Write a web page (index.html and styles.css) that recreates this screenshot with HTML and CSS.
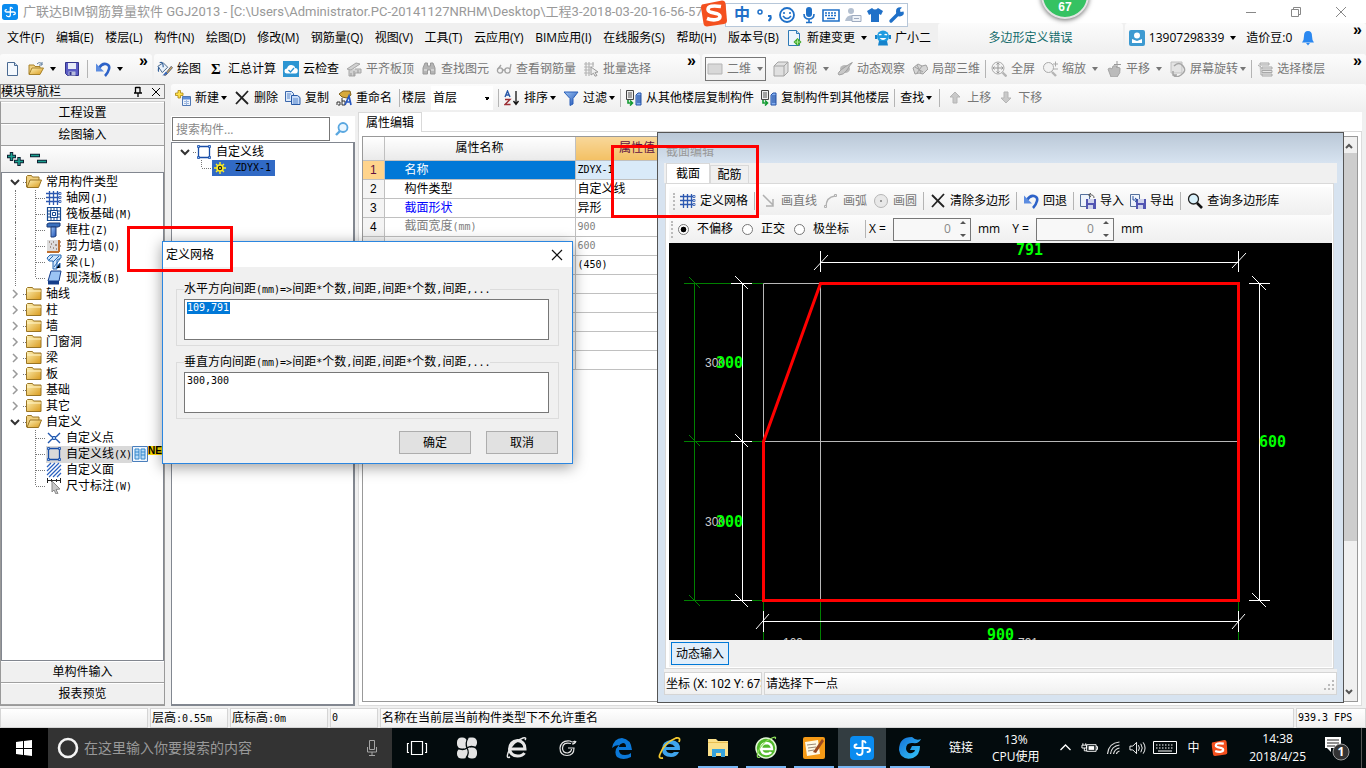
FILE: index.html
```html
<!DOCTYPE html>
<html lang="zh-CN">
<head>
<meta charset="utf-8">
<title>广联达BIM钢筋算量软件 GGJ2013</title>
<link rel="stylesheet" href="styles.css">
</head>
<body>
<svg class="sprite" aria-hidden="true">
  <defs>
    <linearGradient id="gold" x1="0" y1="0" x2="1" y2="1"><stop offset="0" stop-color="#fff3b8"/><stop offset="1" stop-color="#d99a1c"/></linearGradient>
    <linearGradient id="blue" x1="0" y1="0" x2="1" y2="1"><stop offset="0" stop-color="#9cc4f4"/><stop offset="1" stop-color="#1c4fb4"/></linearGradient>
    <linearGradient id="flame" x1="0" y1="0" x2="1" y2="1"><stop offset="0" stop-color="#1470d8"/><stop offset="1" stop-color="#35c8f8"/></linearGradient>
  </defs>
  <symbol id="app" viewBox="0 0 24 24"><rect width="24" height="24" rx="4" fill="#0a8cf0"/><path d="M12.500 5v11q0 3-3 3-2 0-2.500-1.500M12.500 12H6.500Q4.500 12 4.500 10.300t2-1.800M12.500 12h5q2.500 0 2.500 2t-2.500 2M12.500 5q2.500 0 3 1.500" fill="none" stroke="#fff" stroke-width="1.900" stroke-linecap="round"/></symbol>
  <symbol id="new" viewBox="0 0 16 16"><path d="M2.500 1.500h7l3 3v10h-10z" fill="#f4f8fd" stroke="#4a6a92"/><path d="M9.500 1.500v3h3" fill="#cfdff2" stroke="#4a6a92"/></symbol>
  <symbol id="open" viewBox="0 0 16 16"><path d="M1 13V4h5l1 1.500h5V7" fill="#f0d080" stroke="#a8822a"/><path d="M1 13.500 4 7h11.500L12 13.500z" fill="url(#gold)" stroke="#a8822a"/><path d="M9 3q3-3 5 .5m0-2.500v3h-3" fill="none" stroke="#5b7a9c"/></symbol>
  <symbol id="save" viewBox="0 0 16 16"><path d="M1.500 1.500h13v13h-11l-2-2z" fill="#5b5cc4" stroke="#33348c"/><path d="M4 2h8v6H4z" fill="#e8ecf8"/><path d="M4.500 10.500h7v4h-7z" fill="#b9bedc"/><path d="M5.500 11h2v3h-2z" fill="#33348c"/></symbol>
  <symbol id="undo" viewBox="0 0 16 16"><path d="M4 7q3-5 7-4t3 5-4 7" fill="none" stroke="#2d62c8" stroke-width="2.600"/><path d="M1 2.500v8h8z" fill="#5c8ce0"/></symbol>
  <symbol id="draw" viewBox="0 0 18 16"><path d="M1 5l6-4 5 5-6 6z" fill="#eaf2fb" stroke="#35577e"/><path d="M3 1q4-2 4 5M2 6q-1 4 0 5" fill="none" stroke="#2f5e9a" stroke-width="1.300"/><path d="M8 15l8-10 1.500 1.500L10 15z" fill="#d8a850" stroke="#4d5d82"/><path d="M6 15.500 10 11l2 2z" fill="#2c63c0"/></symbol>
  <symbol id="cloud" viewBox="0 0 16 16"><path d="M0 0h16v16H0z" fill="#2c95d2"/><path d="M4 12.500q-2.500 0-2.500-2.500T4 7.500Q5 3.500 8.500 4T12 7q3 0 2.800 3t-2.800 2.500z" fill="#fff"/><path d="m5.500 9 2 2L11 7" fill="none" stroke="#2c95d2" stroke-width="1.300"/></symbol>
  <symbol id="align" viewBox="0 0 16 16"><path d="M1 8 10 2l4 1-9 6zM3 9v6h6v-3h6V8H9" fill="#d2d2d2" stroke="#a6a6a6"/><path d="M5 12v3M8 10v5M12 9v3" stroke="#999"/></symbol>
  <symbol id="binoc" viewBox="0 0 16 16"><path d="M2 7 4 2h2.500v3h3V2H12l2 5v6H9.500V9h-3v4H2z" fill="#b5b5b5" stroke="#999"/><path d="M3 9h3M10 9h3" stroke="#eee"/></symbol>
  <symbol id="glasses" viewBox="0 0 16 16"><g fill="none" stroke="#a3a3a3" stroke-width="1.300"><circle cx="4" cy="9.500" r="2.600"/><circle cx="11.500" cy="9.500" r="2.600"/><path d="M6.500 9h2.500M2 8l3-4M14 8l1-5"/></g></symbol>
  <symbol id="batch" viewBox="0 0 16 16"><path d="M1 3h10M1 6h8M1 9h6M1 12h6M3 1v14M6 1v14M10 1v5" stroke="#b5b5b5" stroke-width="1.200"/><path d="m8 6 7 5-3 .5 2 3-2 .7-1.500-3L8 14z" fill="#eee" stroke="#999"/></symbol>
  <symbol id="flat" viewBox="0 0 16 16"><path d="M1 3h14v10H1z" fill="#d8d8d8" stroke="#b5b5b5"/></symbol>
  <symbol id="cube" viewBox="0 0 16 16"><path d="M1 5 5 1h10v10l-4 4H1z" fill="#e0e0e0" stroke="#a4a4a4"/><path d="M1 5h10v10M11 5l4-4" fill="none" stroke="#a4a4a4"/></symbol>
  <symbol id="orbit" viewBox="0 0 16 16"><ellipse cx="8" cy="8" rx="5" ry="4" fill="#b8b8b8"/><path d="M2 14Q-1 12 8 6t7-4-5 7-8 5z" fill="#c8c8c8" stroke="#a0a0a0"/></symbol>
  <symbol id="local" viewBox="0 0 16 16"><path d="m1 7 5-4 4 2 4-1 2 4-5 5-4-1-4 1z" fill="#d5d5d5" stroke="#a0a0a0"/><path d="m5 4 4 8M10 5l-5 7M3 6l8 5" stroke="#a0a0a0"/></symbol>
  <symbol id="full" viewBox="0 0 16 16"><circle cx="7" cy="7" r="6" fill="#f2f2f2" stroke="#aaa"/><path d="M7 2v10M2 7h10M5.500 3.500 7 2l1.500 1.500M5.500 10.500 7 12l1.500-1.500M3.500 5.500 2 7l1.500 1.500M10.500 5.500 12 7l-1.500 1.500" fill="none" stroke="#999"/><path d="m11.500 11.500 4 4" stroke="#b5b5b5" stroke-width="2.400"/></symbol>
  <symbol id="zoomi" viewBox="0 0 16 16"><circle cx="6.500" cy="6.500" r="5" fill="#f2f2f2" stroke="#aaa"/><path d="m10 11 4 4" stroke="#b5b5b5" stroke-width="2.400"/><path d="M11 3h5M13.500.5v5M11 8h5" stroke="#aaa"/></symbol>
  <symbol id="pan" viewBox="0 0 16 16"><path d="M2 8q2-2 4 0l1-3q3-1 4 1l3 1q1 5-3 9H5z" fill="#bbb" stroke="#a5a5a5"/><path d="M11 0v7M8 3.500h7" stroke="#999"/></symbol>
  <symbol id="rot" viewBox="0 0 16 16"><path d="M1 1h11v11H1z" fill="#e3e3e3" stroke="#c0c0c0"/><path d="M4 5q5-5 9 0t-2 9-8-1m0-3v4h4" fill="none" stroke="#a5a5a5" stroke-width="1.500"/></symbol>
  <symbol id="floors" viewBox="0 0 16 16"><path d="M3 2h9v2H3zM5 6h10v2H5zM5 9.500h10v2H5zM5 13h10v2H5zM1 4l3 2v8" fill="#e8e8e8" stroke="#a8a8a8"/></symbol>
  <symbol id="create" viewBox="0 0 16 16"><path d="M7.500 6.500h8v9h-8z" fill="#eef4fc" stroke="#5078b4"/><path d="M8 7h7v2.500H8z" fill="#5c8dd8"/><path d="M9 11.500h5M9 13.500h5M11.500 10v5" stroke="#9db8e0"/><path d="M3 .5h2.500v2.500H8v2.500H5.500V8H3V5.500H.5V3H3z" fill="#ffe14a" stroke="#aa8410" stroke-width=".8"/></symbol>
  <symbol id="del" viewBox="0 0 16 16"><path d="m2 2 12 12M14 1 2 14" stroke="#222" stroke-width="1.800"/></symbol>
  <symbol id="copy" viewBox="0 0 16 16"><path d="M.5 1.500h6l2 2v8h-8z" fill="#dce9fa" stroke="#3c68ac"/><path d="M6.500 5.500h6l2.500 2v7H6.500z" fill="#c8dcf8" stroke="#2859a5"/><path d="M8 9h5M8 11h5M8 13h5M2 4h4M2 6h3M2 8h3" stroke="#4a7ac4" stroke-width=".9"/></symbol>
  <symbol id="rename" viewBox="0 0 16 16"><path d="m3 4 4-3h7l1 4-4 3-5-1z" fill="#d6a93c" stroke="#80611c"/><path d="M1 15v-3h3v3H2M6 8v7h3v-4H6" fill="none" stroke="#333"/><path d="m9 15 4-9 2 9m-4-3h4" fill="none" stroke="#2858c0" stroke-width="1.700"/></symbol>
  <symbol id="sort" viewBox="0 0 16 16"><path d="m1 7 2.500-6L6 7M2 5h3" fill="none" stroke="#2858a8" stroke-width="1.400"/><path d="M1 9.500h5l-5 5h5.500" fill="none" stroke="#9c2f34" stroke-width="1.400"/><path d="M12 1v13M9.500 11 12 14.500 14.500 11" fill="none" stroke="#111" stroke-width="1.300"/></symbol>
  <symbol id="filter" viewBox="0 0 16 16"><path d="M1 2h14L10 8.500V14l-3 1.500v-7z" fill="url(#blue)" stroke="#2a5fb8"/></symbol>
  <symbol id="bld" viewBox="0 0 16 16"><path d="M.5.500h7v9h-7z" fill="#eee" stroke="#444"/><path d="M2 3h4M2 5h4M2 7h4" stroke="#555"/><path d="m10 5 2-2h3v12h-5z" fill="#83aef0" stroke="#2452a6"/><path d="M11 6h4M11 8h4M11 10h4M11 12h4" stroke="#1c4898"/><path d="M2 10v3h4m-2-2.500L6.500 13 4 15.500" fill="none" stroke="#139b32" stroke-width="1.600"/></symbol>
  <symbol id="up" viewBox="0 0 16 16"><path d="m8 2 5 5h-3v6H6V7H3z" fill="#c9c9c9" stroke="#b5b5b5"/></symbol>
  <symbol id="down" viewBox="0 0 16 16"><path d="m8 13 5-5h-3V2H6v6H3z" fill="#c9c9c9" stroke="#b5b5b5"/></symbol>
  <symbol id="change" viewBox="0 0 16 16"><path d="M1.500.500h8l3 3v12h-11z" fill="#edf5fd" stroke="#2d79b5"/><path d="M9.500.500v3h3" fill="#bddaf3" stroke="#2d79b5"/><path d="m10.500 8 4 4-4 4-4-4z" fill="#3da826"/><path d="M10.500 9.500v5M8 12h5" stroke="#a9e795"/></symbol>
  <symbol id="robot" viewBox="0 0 16 16"><circle cx="8" cy="6.500" r="6" fill="#1d9be0"/><path d="M0 5h2v4H0zM14 5h2v4h-2zM4 11h8l1 4.500H3z" fill="#1583cc"/><path d="M4 5q1.200-1.200 2.400 0M9.600 5q1.200-1.200 2.400 0" stroke="#fff" stroke-width="1.200" fill="none"/><path d="M4.500 8h7q-3.500 4-7 0z" fill="#fff"/></symbol>
  <symbol id="user" viewBox="0 0 16 16"><rect width="16" height="16" rx="2" fill="#3d9ad1"/><circle cx="8" cy="5.500" r="3" fill="#fff"/><path d="M3 13V9l5 2 5-2v4z" fill="#fff"/></symbol>
  <symbol id="bell" viewBox="0 0 12 16"><path d="M0 12.500q2-2 2-6.500 0-5 4-5t4 5q0 4.500 2 6.500z" fill="#2b88f0"/><path d="M4 13h4l-2 2.500z" fill="#2b88f0"/></symbol>
  <symbol id="grid" viewBox="0 0 16 16"><path d="M0 3.500h14M0 7.500h14M0 11.500h14M3.500 1v14M7.500 1v14M11.500 1v14" stroke="#2c58b0" stroke-width="1.300"/><path d="M13 2.500h2v2h-2zM13 6.500h2v2h-2zM13 10.500h2v2h-2z" fill="#fff" stroke="#2c58b0" stroke-width=".8"/></symbol>
  <symbol id="raft" viewBox="0 0 16 16"><path d="M1.500 1.500h13v13h-13zM4.500 4.500h7v7h-7z" fill="none" stroke="#174a90" stroke-width="1.200"/><path d="M8 1v3M8 12v3M1 8h3M12 8h3M5 1v3M11 1v3M5 12v3M11 12v3M1 5h3M12 5h3M1 11h3M12 11h3M6.500 6.500h3v3h-3z" fill="none" stroke="#174a90"/></symbol>
  <symbol id="column" viewBox="0 0 16 16"><path d="m1 2 2-1h11v3l-2 1H1z" fill="#3970bd" stroke="#1b3b78"/><path d="M5 5h5v9l-2 1H5z" fill="url(#blue)" stroke="#1b3b78"/></symbol>
  <symbol id="wall" viewBox="0 0 16 16"><path d="M1 2h12v12H1z" fill="#ddd"/><path d="M1 14h12M13 2v12" stroke="#c07030" stroke-width="2"/><path d="M3 4h1M7 4h1M5 6h1M9 7h2M4 9h1M7 10h1M10 11h1M14 4h1M14 8h1" stroke="#6b4a38"/></symbol>
  <symbol id="beam" viewBox="0 0 16 16"><path d="M1 4 4 1h11v3l-4 2v9H7V7H3z" fill="#cfe4fb" stroke="#2467b2"/><path d="m3 6 4-4M7 8l6-6M8 13l6-8M10 14l4-5v5" stroke="#2467b2"/></symbol>
  <symbol id="slab" viewBox="0 0 16 16"><path d="M5 1h10l-2 10H2z" fill="#9cc4f4" stroke="#143d8a"/><path d="M2 11h11v3.500H2z" fill="#143d8a"/></symbol>
  <symbol id="point" viewBox="0 0 16 16"><path d="m2 3 4 4M14 3l-4 4M2 13l4-4M14 13l-4-4" stroke="#2257ad" stroke-width="1.400"/><path d="M6.500 6.500h3v3h-3z" fill="#9fc6f2" stroke="#2257ad"/></symbol>
  <symbol id="poly" viewBox="0 0 16 16"><path d="M2.500 2.500h11v11h-11z" fill="none" stroke="#184da6" stroke-width="1.300"/><path d="M1.500 1.500h2v2h-2zM12.500 1.500h2v2h-2zM1.500 12.500h2v2h-2zM12.500 12.500h2v2h-2z" fill="#9ac4fa" stroke="#184da6" stroke-width=".8"/></symbol>
  <symbol id="hatch" viewBox="0 0 16 16"><path d="m1 5 4-4M1 9l8-8M1 13l12-12M3 15 15 3M7 15l8-8M11 15l4-4" stroke="#2b62c0" stroke-width="1.200"/></symbol>
  <symbol id="dim" viewBox="0 0 16 16"><path d="M1.500 0v5M14.500 0v5M1 2.500h14M5.500 1v3M10.500 1v3" stroke="#222"/><path d="m6 3 8 8-4 .5 2 4-2 .5-2-4-2 2z" fill="#c8c8c8" stroke="#888"/></symbol>
  <symbol id="folder" viewBox="0 0 16 16"><path d="M.5 13.500v-11l1-1h5l1 1.500h7.500v10.500z" fill="url(#gold)" stroke="#9a7524"/><path d="M1 5h14" stroke="#fff4c8"/></symbol>
  <symbol id="fopen" viewBox="0 0 16 16"><path d="M.5 13V2.500l1-1h4l1 1.500h6.500V6" fill="#f0d080" stroke="#9a7524"/><path d="M1 13.500 4 6h11.500l-3 7.500z" fill="url(#gold)" stroke="#9a7524"/></symbol>
  <symbol id="exp" viewBox="0 0 16 16"><path d="m4 6 4 4 4-4" fill="none" stroke="#333" stroke-width="2"/></symbol>
  <symbol id="col" viewBox="0 0 16 16"><path d="m6 4 4 4-4 4" fill="none" stroke="#999" stroke-width="1.500"/></symbol>
  <symbol id="tee" viewBox="0 0 12 16"><path d="M1.500 0v16M2 8.500h10" stroke="#777" stroke-dasharray="1 1"/></symbol>
  <symbol id="ell" viewBox="0 0 12 16"><path d="M1.500 0v8M2 8.500h10" stroke="#777" stroke-dasharray="1 1"/></symbol>
  <symbol id="gear" viewBox="0 0 16 16"><circle cx="8" cy="8" r="3" fill="#222" stroke="#ffee20" stroke-width="1.600"/><path d="M8 2v3M8 11v3M2 8h3M11 8h3M4 4l2 2M10 10l2 2M12 4l-2 2M4 12l2-2" stroke="#ffee20" stroke-width="1.400"/><circle cx="8" cy="8" r="1" fill="#ffee20"/></symbol>
  <symbol id="cols" viewBox="0 0 16 16"><path d="M.5.500h15v15H.5z" fill="#eef5fd" stroke="#4a7ebb"/><path d="M3 3h4v10H3zM9 3h4v10H9z" fill="#b9dcf8" stroke="#3487cb"/><path d="M3 6h4M9 6h4M3 9h4M9 9h4" stroke="#3487cb"/></symbol>
  <symbol id="mag" viewBox="0 0 16 16"><path d="m2 14 4-4" stroke="#5aa7e0" stroke-width="2.400"/><circle cx="9" cy="6.500" r="4.500" fill="#eaf6ff" stroke="#5aa7e0" stroke-width="1.800"/></symbol>
  <symbol id="mag2" viewBox="0 0 16 16"><circle cx="6.500" cy="6" r="5" fill="#d9f1fb" stroke="#222" stroke-width="1.300"/><path d="m10 10 5 5" stroke="#111" stroke-width="2.600"/></symbol>
  <symbol id="lin" viewBox="0 0 16 16"><path d="m2 2 10 10M12 6v7H5" fill="none" stroke="#b0b0b0" stroke-width="1.500"/></symbol>
  <symbol id="arc" viewBox="0 0 16 16"><path d="M3 14Q3 4 12 3" fill="none" stroke="#b0b0b0" stroke-width="1.300"/><path d="M1.500 12.500h2v2h-2zM11.500 1.500h2v2h-2z" fill="#eee" stroke="#b0b0b0"/></symbol>
  <symbol id="circ" viewBox="0 0 16 16"><circle cx="8" cy="8" r="6.500" fill="#e8e8e8" stroke="#b5b5b5"/><path d="M7 7h2v2H7z" fill="#999"/></symbol>
  <symbol id="imp" viewBox="0 0 16 16"><path d="M.5 1.500h9v12h-9z" fill="#eef3fb" stroke="#55709c"/><path d="M6 6h10v10H6z" fill="#5255b2"/><path d="M8 6h6v4H8zM8 12h5v4H8z" fill="#cfd3ec"/><path d="M14 5q0-4-5-3m2-2L8.500 2 11 4" fill="none" stroke="#555"/></symbol>
  <symbol id="expo" viewBox="0 0 16 16"><path d="M.5 1.500h9v12h-9z" fill="#eef3fb" stroke="#55709c"/><path d="M6 6h10v10H6z" fill="#5255b2"/><path d="M8 6h6v4H8zM8 12h5v4H8z" fill="#cfd3ec"/><path d="M3 3v4h4M5 5l2.500 2L5 9" fill="none" stroke="#2a50a0"/></symbol>
  <symbol id="sogou" viewBox="0 0 26 26"><path d="M1 4 21 0q3 0 3.500 3L26 20q0 3-3 3.500L6 26q-3 0-3.500-3L0 7q0-2 1-3z" fill="#f4501e"/><path d="M20 6q-13-2-13 3c0 5 12 2 12 7 0 4-8 4-13 2" fill="none" stroke="#fff" stroke-width="3.600"/></symbol>
</svg>

<div class="desktop">
<header class="titlebar">
  <svg class="i"><use href="#app"/></svg>
  <h1>广联达BIM钢筋算量软件 GGJ2013 - [C:\Users\Administrator.PC-20141127NRHM\Desktop\工程3-2018-03-20-16-56-57(2</h1>
  <div class="winbtns">
    <button aria-label="最小化"><svg viewBox="0 0 12 12"><path d="M1 6.500h10" stroke="#888"/></svg></button>
    <button aria-label="还原"><svg viewBox="0 0 12 12"><path d="M1.500 3.500h7v7h-7zM3.500 3V1.500h7v7H9" fill="none" stroke="#888"/></svg></button>
    <button aria-label="关闭"><svg viewBox="0 0 12 12"><path d="m1 1 10 10M11 1 1 11" stroke="#888"/></svg></button>
  </div>
</header>

<div class="menurow">
  <nav class="menu">
    <button>文件(F)</button><button>编辑(E)</button><button>楼层(L)</button><button>构件(N)</button><button>绘图(D)</button><button>修改(M)</button><button>钢筋量(Q)</button><button>视图(V)</button><button>工具(T)</button><button>云应用(Y)</button><button>BIM应用(I)</button><button>在线服务(S)</button><button>帮助(H)</button><button>版本号(B)</button>
  </nav>
  <div class="band extra"><button class="tb"><svg class="i"><use href="#change"/></svg>新建变更<i class="caret"></i></button><button class="tb"><svg class="i"><use href="#robot"/></svg>广小二</button></div>
  <div class="band notice"><a href="#">多边形定义错误</a></div>
  <div class="band account"><button class="tb"><svg class="i"><use href="#user"/></svg>13907298339<i class="caret"></i></button><span>造价豆:0</span><svg class="bell"><use href="#bell"/></svg><b class="more">»</b></div>
</div>

<div class="toolrow">
  <div class="band files"><button class="tb" aria-label="新建"><svg class="i"><use href="#new"/></svg></button><button class="tb" aria-label="打开"><svg class="i"><use href="#open"/></svg><i class="caret"></i></button><button class="tb" aria-label="保存"><svg class="i"><use href="#save"/></svg></button><i class="sep"></i><button class="tb" aria-label="撤销"><svg class="i"><use href="#undo"/></svg><i class="caret"></i></button><b class="more">»</b></div>
  <div class="band draws"><button class="tb"><svg class="i"><use href="#draw"/></svg>绘图</button><button class="tb"><span class="sigma">Σ</span>汇总计算</button><button class="tb"><svg class="i"><use href="#cloud"/></svg>云检查</button><button class="tb off"><svg class="i"><use href="#align"/></svg>平齐板顶</button><button class="tb off"><svg class="i"><use href="#binoc"/></svg>查找图元</button><button class="tb off"><svg class="i"><use href="#glasses"/></svg>查看钢筋量</button><button class="tb off"><svg class="i"><use href="#batch"/></svg>批量选择</button><b class="more">»</b></div>
  <div class="band views"><button class="tb off boxed"><svg class="i"><use href="#flat"/></svg>二维<i class="caret"></i></button><button class="tb off"><svg class="i"><use href="#cube"/></svg>俯视<i class="caret"></i></button><button class="tb off"><svg class="i"><use href="#orbit"/></svg>动态观察</button><button class="tb off"><svg class="i"><use href="#local"/></svg>局部三维</button><i class="sep tight"></i><button class="tb off"><svg class="i"><use href="#full"/></svg>全屏</button><button class="tb off"><svg class="i"><use href="#zoomi"/></svg>缩放<i class="caret"></i></button><button class="tb off"><svg class="i"><use href="#pan"/></svg>平移<i class="caret"></i></button><button class="tb off snug"><svg class="i"><use href="#rot"/></svg>屏幕旋转<i class="caret"></i></button><i class="sep tight"></i><button class="tb off"><svg class="i"><use href="#floors"/></svg>选择楼层</button><b class="more">»</b></div>
</div>

<main class="work">
  <aside class="nav">
    <header><h2>模块导航栏</h2><button aria-label="固定"><svg viewBox="0 0 12 12"><path d="M3.500 1v6M8 1v6M3.500 1.500H8M2 7h8M6 7v4" fill="none" stroke="#000" stroke-width="1.300"/></svg></button><button aria-label="关闭"><svg viewBox="0 0 12 12"><path d="m2 2 8 8M10 2l-8 8" stroke="#000"/></svg></button></header>
    <div class="navbody">
    <button class="mod">工程设置</button>
    <button class="mod">绘图输入</button>
    <div class="pm"><svg viewBox="0 0 42 16"><g stroke="#123" stroke-width="3.400"><path d="M0 5.500h9M4.500 1v9M7 10.500h10M12 6v9M23 4.500h10M30 10.500h10"/></g><g stroke="#1aa090" stroke-width="1.600"><path d="M1 5.500h7M4.500 2v7M8 10.500h8M12 7v7M24 4.500h8M31 10.500h8"/></g></svg></div>
    <div class="tree">
      <div class="row"><svg class="i"><use href="#exp"/></svg><i class="dot"></i><svg class="i"><use href="#fopen"/></svg><span>常用构件类型</span></div>
      <div class="row kid"><i class="rail"></i><svg class="elbow"><use href="#tee"/></svg><svg class="i"><use href="#grid"/></svg><span>轴网<span class="hw">(J)</span></span></div>
      <div class="row kid"><i class="rail"></i><svg class="elbow"><use href="#tee"/></svg><svg class="i"><use href="#raft"/></svg><span>筏板基础<span class="hw">(M)</span></span></div>
      <div class="row kid"><i class="rail"></i><svg class="elbow"><use href="#tee"/></svg><svg class="i"><use href="#column"/></svg><span>框柱<span class="hw">(Z)</span></span></div>
      <div class="row kid"><i class="rail"></i><svg class="elbow"><use href="#tee"/></svg><svg class="i"><use href="#wall"/></svg><span>剪力墙<span class="hw">(Q)</span></span></div>
      <div class="row kid"><i class="rail"></i><svg class="elbow"><use href="#tee"/></svg><svg class="i"><use href="#beam"/></svg><span>梁<span class="hw">(L)</span></span></div>
      <div class="row kid"><i class="rail"></i><svg class="elbow"><use href="#ell"/></svg><svg class="i"><use href="#slab"/></svg><span>现浇板<span class="hw">(B)</span></span></div>
      <div class="row"><svg class="i"><use href="#col"/></svg><i class="dot"></i><svg class="i"><use href="#folder"/></svg><span>轴线</span></div>
      <div class="row"><svg class="i"><use href="#col"/></svg><i class="dot"></i><svg class="i"><use href="#folder"/></svg><span>柱</span></div>
      <div class="row"><svg class="i"><use href="#col"/></svg><i class="dot"></i><svg class="i"><use href="#folder"/></svg><span>墙</span></div>
      <div class="row"><svg class="i"><use href="#col"/></svg><i class="dot"></i><svg class="i"><use href="#folder"/></svg><span>门窗洞</span></div>
      <div class="row"><svg class="i"><use href="#col"/></svg><i class="dot"></i><svg class="i"><use href="#folder"/></svg><span>梁</span></div>
      <div class="row"><svg class="i"><use href="#col"/></svg><i class="dot"></i><svg class="i"><use href="#folder"/></svg><span>板</span></div>
      <div class="row"><svg class="i"><use href="#col"/></svg><i class="dot"></i><svg class="i"><use href="#folder"/></svg><span>基础</span></div>
      <div class="row"><svg class="i"><use href="#col"/></svg><i class="dot"></i><svg class="i"><use href="#folder"/></svg><span>其它</span></div>
      <div class="row"><svg class="i"><use href="#exp"/></svg><i class="dot"></i><svg class="i"><use href="#fopen"/></svg><span>自定义</span></div>
      <div class="row kid last"><svg class="elbow"><use href="#tee"/></svg><svg class="i"><use href="#point"/></svg><span>自定义点</span></div>
      <div class="row kid last"><svg class="elbow"><use href="#tee"/></svg><span class="hot"><svg class="i"><use href="#poly"/></svg><span>自定义线<span class="hw">(X)</span></span></span><svg class="i"><use href="#cols"/></svg><b class="newtag">NE</b></div>
      <div class="row kid last"><svg class="elbow"><use href="#tee"/></svg><svg class="i"><use href="#hatch"/></svg><span>自定义面</span></div>
      <div class="row kid last"><svg class="elbow"><use href="#ell"/></svg><svg class="i"><use href="#dim"/></svg><span>尺寸标注<span class="hw">(W)</span></span></div>
    </div>
    <button class="mod">单构件输入</button>
    <button class="mod">报表预览</button>
    </div>
  </aside>

  <div class="right">
    <div class="band edit"><button class="tb snug"><svg class="i"><use href="#create"/></svg>新建<i class="caret"></i></button><button class="tb"><svg class="i"><use href="#del"/></svg>删除</button><button class="tb"><svg class="i"><use href="#copy"/></svg>复制</button><button class="tb"><svg class="i"><use href="#rename"/></svg>重命名</button><i class="sep"></i><label class="floor">楼层<select><option>首层</option></select></label><i class="sep tight"></i><button class="tb snug"><svg class="i"><use href="#sort"/></svg>排序<i class="caret"></i></button><button class="tb snug"><svg class="i"><use href="#filter"/></svg>过滤<i class="caret"></i></button><i class="sep tight"></i><button class="tb"><svg class="i"><use href="#bld"/></svg>从其他楼层复制构件</button><button class="tb"><svg class="i"><use href="#bld"/></svg>复制构件到其他楼层</button><i class="sep tight"></i><button class="tb snug">查找<i class="caret"></i></button><i class="sep"></i><button class="tb off"><svg class="i"><use href="#up"/></svg>上移</button><button class="tb off"><svg class="i"><use href="#down"/></svg>下移</button></div>
    <div class="panes">
      <section class="members">
        <div class="search"><input type="text" placeholder="搜索构件..." aria-label="搜索构件"><button aria-label="搜索"><svg class="i"><use href="#mag"/></svg></button></div>
        <div class="tree">
          <div class="row"><svg class="i"><use href="#exp"/></svg><i class="dot"></i><svg class="i"><use href="#poly"/></svg><span>自定义线</span></div>
          <div class="row kid last"><svg class="elbow"><use href="#ell"/></svg><span class="picked"><svg class="i"><use href="#gear"/></svg>ZDYX-1</span></div>
        </div>
      </section>
      <section class="props">
        <div class="tabs"><button>属性编辑</button></div>
        <div class="page">
          <div class="grid">
          <table>
            <thead><tr><th class="no"></th><th class="name">属性名称</th><th class="val">属性值</th><th class="rest"></th></tr></thead>
            <tbody>
              <tr class="sel"><td class="no">1</td><td class="name">名称</td><td class="hw">ZDYX-1</td><td></td></tr>
              <tr><td class="no">2</td><td class="name">构件类型</td><td>自定义线</td><td></td></tr>
              <tr class="link"><td class="no">3</td><td class="name">截面形状</td><td>异形</td><td></td></tr>
              <tr class="dim"><td class="no">4</td><td class="name">截面宽度<span class="hw">(mm)</span></td><td class="hw">900</td><td></td></tr>
              <tr class="dim"><td class="no">5</td><td class="name"></td><td class="hw">600</td><td></td></tr>
              <tr><td class="no">6</td><td class="name"></td><td class="hw">(450)</td><td></td></tr>
              <tr><td class="no">7</td><td></td><td></td><td></td></tr>
              <tr><td class="no">8</td><td></td><td></td><td></td></tr>
              <tr><td class="no">9</td><td></td><td></td><td></td></tr>
              <tr><td class="no">10</td><td></td><td></td><td></td></tr>
              <tr><td class="no">11</td><td></td><td></td><td></td></tr>
            </tbody>
          </table>
          <div class="scroll"><svg viewBox="0 0 14 14"><path d="m4 9 3-3 3 3" fill="none" stroke="#555" stroke-width="2"/></svg><i></i><svg viewBox="0 0 14 14"><path d="m4 5 3 3 3-3" fill="none" stroke="#555" stroke-width="2"/></svg></div>
          </div>
        </div>
      </section>
    </div>
  </div>
</main>

<footer class="status"><span class="s1"></span><span class="s2">层高<span class="hw">:0.55m</span></span><span class="s3">底标高<span class="hw">:0m</span></span><span class="s4 hw">0</span><span class="s5">名称在当前层当前构件类型下不允许重名</span><span class="s6 hw">939.3 FPS</span></footer>

<footer class="taskbar">
  <button class="start" aria-label="开始"><svg viewBox="0 0 16 16"><path d="m0 2 7-1v7H0zM8 1l8-1v8H8zM0 9h7v6l-7-1zM8 9h8v7l-8-1z" fill="#fff"/></svg></button>
  <label class="cortana"><svg viewBox="0 0 22 22"><circle cx="11" cy="11" r="9" fill="none" stroke="#f4f4f4" stroke-width="2.600"/></svg><input type="text" placeholder="在这里输入你要搜索的内容"><svg class="mic" viewBox="0 0 12 18"><path d="M3.500 1.500h5v9h-5zM1.500 8v5h9V8M6 13v3M3 16.500h6" fill="none" stroke="#a5a5a5"/></svg></label>
  <div class="pins">
    <button aria-label="任务视图"><svg viewBox="0 0 24 24"><path d="M6.500 5.500h11v13h-11zM4 7.500H2.500v9H4M20 7.500h1.500v9H20" fill="none" stroke="#fff" stroke-width="1.200"/></svg></button>
    <button aria-label="风车"><svg viewBox="0 0 24 24"><g fill="#e4e4e4"><rect x="2" y="1.500" width="10" height="11" rx="4.500"/><rect x="11" y="1.500" width="11" height="10" rx="4.500"/><rect x="12" y="11.500" width="10" height="11" rx="4.500"/><rect x="2" y="12.500" width="11" height="10" rx="4.500"/><circle cx="12" cy="12" r="3"/></g><path d="M12 12Q10 7 13 2M12 12q4-3 10 0M12 12q3 5-1 10M12 12q-4 3-10 0" stroke="#030b0d" stroke-width="1.300" fill="none"/></svg></button>
    <button aria-label="浏览器"><svg viewBox="0 0 24 24"><path d="M6 13h14q0-7.500-7.500-8.500-7.500 1-8 8.500 1 7 8 7 5 0 7-3" fill="none" stroke="#e8e8e8" stroke-width="3"/><path d="M20 4q2-3-2-2Q7 6 3 17q-2 6 2 4" fill="none" stroke="#e8e8e8" stroke-width="1.400"/></svg></button>
    <button aria-label="广联达"><svg viewBox="0 0 24 24"><path d="M20 5q-2 2-5 0-9-1-10 7 0 7.500 7 7.500 7 0 7-7.500h-6M16 7.500q-8-2-8.500 4.500 0 5 5 5 4-1 4-4M21 5q-1 3-4 3" fill="none" stroke="#e4e4e4" stroke-width="1.200"/></svg></button>
  </div>
  <div class="apps">
    <button aria-label="Edge"><svg viewBox="0 0 24 24"><path d="M2 12Q4 2 12 2q9 1 10 12H9q0 5 6 5 4 0 6-2v4q-8 4-14 0Q3 15 9 9q-4 0-7 3zM9 11h7q0-4-3-4-4 1-4 4z" fill="#0b78d8"/></svg></button>
    <button aria-label="IE"><svg viewBox="0 0 24 24"><path d="M8 14h14q1-9-9-10Q4 5 4 13t9 8q6 0 8-5h-5q-2 2-4 1-3 0-4-3zm0-3q1-3 4-3t5 3z" fill="#3fa4ec"/><path d="M21 6q2-5-3-4Q6 7 2 18q-2 5 3 4" fill="none" stroke="#f4c930" stroke-width="1.800"/></svg></button>
    <button class="run" aria-label="文件资源管理器"><svg viewBox="0 0 24 24"><path d="M2 3h8l2 2h10v15H2z" fill="#fbe08a"/><path d="M2 6h20v1H2z" fill="#e8bd50"/><path d="M6 21v-8h13v8h-4v-4h-5v4z" fill="#37a3dc"/></svg></button>
    <button class="run" aria-label="360浏览器"><svg viewBox="0 0 24 24"><circle cx="12" cy="12" r="10" fill="#52b92c" stroke="#e4f8d8" stroke-width="1.500"/><path d="M7 13h11q0-6-6-6-5 1-5 6 1 5 5 5 4 0 5-2" fill="none" stroke="#fff" stroke-width="2.400"/><path d="M21 3q2-3-3-1Q8 6 4 16q-2 7 2 5" fill="none" stroke="#8ee05c" stroke-width="1.200"/></svg></button>
    <button class="run" aria-label="便笺"><svg viewBox="0 0 24 24"><rect x="1" y="1" width="22" height="22" rx="2" fill="#f59a16"/><path d="m3 6 13-2 2 14-13 2z" fill="#fff8e4"/><path d="m5 9 9-1M6 12l8-1M6 15l6-1" stroke="#987"/><path d="m11 16 9-13 2 2-8 12z" fill="#9c4a20"/></svg></button>
    <button class="run on" aria-label="GGJ2013"><svg><use href="#app"/></svg></button>
    <button class="run" aria-label="广联达G"><svg viewBox="0 0 24 24"><path d="M23 3q-2 5-8 4-7-1-7 6 1 5 6 4 3-1 3-3h-5l2-4h8q0 9-7 12Q3 25 1 14 1 1 14 1q4 4 9 2z" fill="url(#flame)"/></svg></button>
  </div>
  <span class="links">链接</span>
  <span class="cpu">13%<br>CPU使用</span>
  <div class="tray">
    <svg viewBox="0 0 16 16"><path d="m3 10 5-5 5 5" fill="none" stroke="#fff" stroke-width="1.300"/></svg>
    <svg viewBox="0 0 18 16"><path d="M6 4.500h10v7H6zM16 6.500h1.500v3H16M1 5h5v3H1zM2 3v2M5 3v2M3.500 8v3H6" fill="none" stroke="#fff"/><path d="M8 6h6v4H8z" fill="#fff"/></svg>
    <svg viewBox="0 0 16 16"><path d="M2 14Q3 3 14 2M5 14q1-8 9-9M8 14q1-5 6-6M11 14q0-2 3-3" fill="none" stroke="#ddd" stroke-width="1.200"/></svg>
    <svg viewBox="0 0 18 16"><path d="M1 6h3l4-4v12l-4-4H1zM10 5q2 3 0 6M12.500 3.500q3 4.500 0 9M15 2q4 6 0 12" fill="none" stroke="#fff"/></svg>
    <svg class="kbd" viewBox="0 0 24 14"><path d="M.5.500h23v12H.5z" fill="none" stroke="#fff"/><path d="M3 4h18M3 7h18" stroke="#fff" stroke-dasharray="1.500 1.500"/><path d="M5 10h14" stroke="#fff"/></svg>
    <b>中</b>
    <svg viewBox="0 0 26 26"><use href="#sogou"/></svg>
  </div>
  <span class="clock">14:38<br>2018/4/25</span>
  <button class="action" aria-label="通知"><svg viewBox="0 0 26 26"><path d="M1 2h16v11H7v4l-4-4H1z" fill="#fff"/><path d="M3 5h12M3 8h12M3 11h8" stroke="#222"/><circle cx="17" cy="17" r="8" fill="#333" stroke="#999"/><text x="17" y="21" text-anchor="middle">1</text></svg></button>
  <i class="peek"></i>
</footer>

<section class="section-win">
  <header>截面编辑</header>
  <div class="swtabs"><button class="cur">截面</button><button>配筋</button></div>
  <div class="swpage">
    <div class="band"><i class="grip"></i><button class="tb"><svg class="i"><use href="#grid"/></svg>定义网格</button><i class="sep"></i><button class="tb off"><svg class="i"><use href="#lin"/></svg>画直线</button><button class="tb off"><svg class="i"><use href="#arc"/></svg>画弧</button><button class="tb off"><svg class="i"><use href="#circ"/></svg>画圆</button><i class="sep"></i><button class="tb"><svg class="i"><use href="#del"/></svg>清除多边形</button><i class="sep"></i><button class="tb"><svg class="i"><use href="#undo"/></svg>回退</button><i class="sep"></i><button class="tb"><svg class="i"><use href="#imp"/></svg>导入</button><button class="tb"><svg class="i"><use href="#expo"/></svg>导出</button><i class="sep"></i><button class="tb"><svg class="i"><use href="#mag2"/></svg>查询多边形库</button></div>
    <div class="band opts"><i class="grip"></i><div class="radios"><label><input type="radio" name="off" checked>不偏移</label><label><input type="radio" name="off">正交</label><label><input type="radio" name="off">极坐标</label></div><i class="sep"></i><label class="num">X =<span><input type="text" value="0"><svg viewBox="0 0 8 18"><path d="m1 4 3-3 3 3zM1 14l3 3 3-3z" fill="#555"/></svg></span>mm</label><label class="num">Y =<span><input type="text" value="0"><svg viewBox="0 0 8 18"><path d="m1 4 3-3 3 3zM1 14l3 3 3-3z" fill="#555"/></svg></span>mm</label></div>
    <svg class="canvas" viewBox="669 243 663 397" preserveAspectRatio="xMinYMin slice">
      <g stroke="#008000" fill="none"><path d="M684 283.500h79M684 441.500h79M684 600.500h79M694.500 283v317M763.500 600v40M820.500 600v40M1238.500 600v40M689 277l11 11M689 435l11 11M689 595l11 11"/></g>
      <g stroke="#b8b8b8" fill="none"><path d="M763.500 441v-157.500h57v317M763.500 441.500h475"/></g>
      <g stroke="#fff" fill="none"><path d="M820.500 262.500h418M820.500 251v21M1238.500 251v21M814 270l14-15M1232 268l14-15M742.500 283v317M731 283.500h21M731 441.500h21M731 600.500h21M735 276l13 13M735 434l13 13M735 594l13 13M1259.500 283v317M1249 283.500h21M1249 600.500h21M1252 276l14 14M1252 593l14 14M763.500 621.500h475M763.500 611v21M1238.500 611v21M756 629l13-15M1232 629l13-15"/></g>
      <path d="M820.500 283.500h418v317h-475v-159z" fill="none" stroke="red" stroke-width="3"/>
      <g class="small"><text x="705" y="367">300</text><text x="705" y="526">300</text><text x="783" y="647">109</text><text x="1018" y="647">791</text></g>
      <g class="big"><text x="1016" y="255">791</text><text x="716" y="368">300</text><text x="716" y="527">300</text><text x="1259" y="447">600</text><text x="987" y="640">900</text></g>
    </svg>
    <div class="dyn"><button>动态输入</button></div>
  </div>
  <footer><span class="xy">坐标 (X: 102 Y: 673</span><span class="tip">请选择下一点<svg viewBox="0 0 12 12"><path d="M9 1h2v2H9zM9 5h2v2H9zM5 5h2v2H5zM9 9h2v2H9zM5 9h2v2H5zM1 9h2v2H1z" fill="#bbb"/></svg></span></footer>
</section>

<section class="grid-dlg">
  <header><h2>定义网格</h2><button aria-label="关闭"><svg viewBox="0 0 12 12"><path d="m1 1 10 10M11 1 1 11" stroke="#111" stroke-width="1.200"/></svg></button></header>
  <form>
    <fieldset><legend><label for="hz">水平方向间距<span class="hw">(mm)=&gt;</span>间距<span class="hw">*</span>个数<span class="hw">,</span>间距<span class="hw">,</span>间距<span class="hw">*</span>个数<span class="hw">,</span>间距<span class="hw">,...</span></label></legend><textarea class="field chosen" id="hz">109,791</textarea></fieldset>
    <fieldset><legend><label for="vt">垂直方向间距<span class="hw">(mm)=&gt;</span>间距<span class="hw">*</span>个数<span class="hw">,</span>间距<span class="hw">,</span>间距<span class="hw">*</span>个数<span class="hw">,</span>间距<span class="hw">,...</span></label></legend><textarea class="field" id="vt">300,300</textarea></fieldset>
    <div class="acts"><button type="button">确定</button><button type="button">取消</button></div>
  </form>
</section>

<div class="ime"><svg class="logo"><use href="#sogou"/></svg><div class="keys">
  <b>中</b>
  <svg viewBox="0 0 18 18"><circle cx="4" cy="6" r="2" fill="none" stroke="#1f70c8" stroke-width="1.500"/><path d="M12 10h2.500q1 3-2 5" fill="none" stroke="#1f70c8" stroke-width="2"/></svg>
  <svg viewBox="0 0 18 18"><circle cx="9" cy="9" r="7" fill="none" stroke="#1f70c8" stroke-width="1.800"/><path d="M6 6v2M12 6v2M5 10q4 5 8 0" fill="none" stroke="#1f70c8" stroke-width="1.600"/></svg>
  <svg viewBox="0 0 18 18"><rect x="6" y="1" width="6" height="10" rx="3" fill="#1f70c8"/><path d="M4 8q0 5 5 5t5-5M9 13v3M6 16.500h6" fill="none" stroke="#1f70c8" stroke-width="1.600"/></svg>
  <svg viewBox="0 0 18 18"><path d="M1 4h16v11H1z" fill="none" stroke="#1f70c8" stroke-width="1.600"/><path d="M3 7h12M3 9.500h12" stroke="#1f70c8" stroke-width="1.400" stroke-dasharray="2 1"/><path d="M5 12.500h8" stroke="#1f70c8" stroke-width="1.400"/></svg>
  <svg viewBox="0 0 18 18"><circle cx="7" cy="5" r="3" fill="#b4c0d0"/><path d="M1 15q1-6 8-6v6z" fill="#b4c0d0"/><path d="M8 9.500h9v6H8z" fill="#eef2f7" stroke="#9eabc0"/><path d="M10 12.500h5" stroke="#9eabc0"/></svg>
  <svg viewBox="0 0 18 18"><path d="m1 5 5-3q3 3 6 0l5 3-2 4-2-1v8H5V8L3 9z" fill="#1f70c8"/></svg>
  <svg viewBox="0 0 18 18"><path d="m3 15 7-7" stroke="#1f70c8" stroke-width="3.400" stroke-linecap="round"/><path d="M15.500 5.500 12.500 6 12 3.500 14 1.500q-6-1-6 4t4 5q5-1 3.500-5z" fill="#1f70c8"/></svg>
</div></div>
<div class="ball">67</div>
<i class="hl hl-title"></i>
<i class="hl hl-grid"></i>
</div>
</body>
</html>
```
FILE: styles.css
```css
* { box-sizing: border-box; }
body { margin: 0; background: #f0f0f0; color: #000; font: 12px/16px "Liberation Sans", "Noto Sans CJK SC", sans-serif; }
button, input, select, textarea { font: inherit; color: inherit; margin: 0; }
button { padding: 0; border: 0; background: none; white-space: nowrap; }
h1, h2 { margin: 0; font: inherit; }
svg { display: block; flex: none; }
.sprite { position: absolute; width: 0; height: 0; }
.i { width: 16px; height: 16px; }
.hw { font-family: "DejaVu Sans Mono", monospace; font-size: 10px; }

.desktop { position: relative; display: flex; flex-direction: column; min-height: 100vh; overflow: hidden; }

.titlebar { display: flex; align-items: center; height: 23px; padding: 0 19px 0 2px; background: #fff; color: #999; }
.titlebar h1 { flex: 1; margin-left: 5px; overflow: hidden; white-space: nowrap; font: 13px/20px Roboto, "Noto Sans CJK SC", sans-serif; }
.winbtns { display: flex; gap: 33px; }
.winbtns svg { width: 12px; height: 12px; }

.menurow, .toolrow { display: flex; gap: 2px; height: 30px; font-family: "Open Sans", "Noto Sans CJK SC", sans-serif; }
.menu { display: flex; align-items: center; justify-content: space-between; width: 779px; padding-left: 7px; }
.band { display: flex; align-items: center; gap: 7px; border-radius: 3px; background: linear-gradient(#fcfcfc, #efefef); white-space: nowrap; font-family: "Open Sans", "Noto Sans CJK SC", sans-serif; }
.menurow .extra { background: none; padding: 0 5px 0 6px; gap: 7px; }
.menurow .notice { flex: 187 1 0; justify-content: center; }
.notice a { color: #146b6b; text-decoration: none; }
.menurow .account { flex: 240 1 0; padding-left: 4px; }
.account > span { margin-left: 2px; }
.bell { width: 12px; height: 16px; margin-left: 3px; }
.more { align-self: flex-start; margin-left: auto; padding-right: 4px; font: bold 16px/14px "Liberation Sans", sans-serif; }

.toolrow { margin-top: 1px; }
.tb { display: flex; align-items: center; gap: 4px; }
.tb.off { color: #777; }
.caret { margin: 0 1px 0 2px; border: 3px solid transparent; border-top: 4px solid currentColor; border-bottom: 0; }
.snug .caret { margin: 0 0 0 -2px; }
.sep { width: 1px; height: 18px; background: #b4b4b4; }
.tight { margin: 0 -2px; }
.files { width: 152px; padding-left: 5px; }
.draws { width: 546px; padding-left: 3px; }
.views { flex: 1; padding-left: 3px; }
.sigma { width: 16px; text-align: center; font: bold 15px/16px "Liberation Serif", serif; }
.boxed { height: 24px; padding: 0 1px; border: 1px solid #777; }

.work { flex: 1; display: flex; gap: 6px; min-height: 0; }
.nav { width: 165px; display: flex; flex-direction: column; }
.nav header { display: flex; align-items: center; gap: 6px; height: 15px; border: 1px solid #888; padding-right: 2px; margin-bottom: 2px; }
.nav header h2 { flex: 1; }
.nav header svg { width: 12px; height: 12px; }
.navbody { flex: 1; display: flex; flex-direction: column; border: 1px solid #999; border-top-color: #ccc; }
.mod { height: 22px; border-top: 1px solid #fff; border-bottom: 1px solid #a0a0a0; background: #f0f0f0; }
.pm { height: 26px; padding: 5px 6px; background: linear-gradient(#fdfdfd, #eee); }
.pm svg { width: 42px; height: 16px; }
.tree { flex: 1; background: #fff; border: 1px solid #828790; overflow: hidden; }
.nav .tree { padding-top: 1px; }
.row { display: flex; align-items: center; height: 16px; padding-left: 5px; gap: 4px; white-space: nowrap; }
.row .dot { width: 3px; margin: 0 -4px; border-top: 1px dotted #777; }
.row.kid { padding-left: 13px; }
.rail { width: 1px; height: 16px; border-left: 1px dotted #777; }
.rail + .elbow { margin-left: 14px; }
.elbow { width: 12px; height: 16px; margin-right: -4px; }
.row.last { padding-left: 32px; }
.members .row.last { padding-left: 28px; }
.hot { display: flex; gap: 4px; background: #d9d9d9; }
.hot + svg { margin-left: -4px; }
.newtag { margin-left: -4px; align-self: flex-start; background: #ffd800; font-size: 10px; line-height: 9px; }

.right { flex: 1; display: flex; flex-direction: column; min-width: 0; }
.edit { height: 28px; padding-left: 4px; }
.floor { display: flex; align-items: center; gap: 5px; margin-left: -5px; }
.floor select { width: 62px; height: 24px; padding: 0 0 0 2px; border: 0; appearance: none; background-color: #fff; background-image: linear-gradient(45deg, transparent 50%, #000 50%), linear-gradient(-45deg, transparent 50%, #000 50%); background-position: right 6px center, right 3px center; background-size: 3px 3px; background-repeat: no-repeat; }
.panes { flex: 1; display: flex; gap: 3px; }
.members { width: 184px; display: flex; flex-direction: column; padding-top: 4px; }
.search { display: flex; align-items: center; height: 26px; gap: 4px; background: #fff; }
.search input { width: 158px; height: 24px; margin-left: 1px; padding: 0 3px; border: 1px solid #777; font-family: "Open Sans", "Noto Sans CJK SC", sans-serif; }
.search input::placeholder { color: #888; opacity: 1; }
.search button { display: grid; place-items: center; width: 16px; height: 16px; flex: none; }
.members .tree { border-width: 1px 2px 2px 1px; padding-top: 1px; }
.picked { display: flex; align-items: center; gap: 7px; padding-right: 4px; background: #316ac5; font: 10px/16px "DejaVu Sans Mono", monospace; }
.props { flex: 1; display: flex; flex-direction: column; min-width: 0; background: #fff; border-right: 4px solid #f0f0f0; }
.tabs { display: flex; height: 20px; border-bottom: 1px solid #d9d9d9; }
.tabs button { height: 20px; width: 64px; background: #fff; border: 1px solid #d9d9d9; border-bottom: 0; }
.page { flex: 1; display: flex; padding: 4px 3px 3px; border: 1px solid #dcdcdc; border-top: 0; }
.grid { flex: 1; display: flex; align-items: flex-start; border: 1px solid #999; }
table { flex: 1; table-layout: fixed; border-collapse: collapse; width: 100px; }
th, td { height: 19px; padding: 0 2px; border: 1px solid #c0c0c0; border-width: 0 1px 1px 0; text-align: left; line-height: 16px; }
th { height: 23px; font-weight: normal; text-align: center; background: linear-gradient(#fff, #eaeaea); }
th.no { width: 21px; }
th.name { width: 191px; }
th.val { width: 124px; color: #601040; background: linear-gradient(#f8d79a, #f3c064); }
td.no { text-align: center; background: #f4f4f4; }
td.name { padding-left: 20px; }
.sel td { background: #d9eaf9; }
.sel td.no { background: #ffd48c; color: #601040; }
.sel td.name { background: #0078d7; color: #fff; }
.link td.name { color: #00f; }
.dim td:not(.no) { color: #808080; }
.scroll { align-self: stretch; display: flex; flex-direction: column; align-items: center; width: 16px; padding: 2px 0; background: #f0f0f0; }
.scroll svg { width: 14px; height: 14px; }
.scroll i { flex: 1; width: 15px; background: linear-gradient(#cdcdcd, #cdcdcd) no-repeat 0 0/100% 73%; }

.status { display: flex; gap: 2px; height: 22px; padding-top: 2px; white-space: nowrap; overflow: hidden; }
.status > span { padding: 1px 1px 0; border: 1px solid #d5d5d5; background: linear-gradient(#fff, #f0f0f0); }
.s1 { width: 148px; } .s2 { width: 78px; } .s3 { width: 98px; } .s4 { width: 48px; } .s5 { flex: 1; } .s6 { width: 70px; }

.taskbar { display: flex; align-items: center; height: 40px; background: #030b0d; color: #fff; white-space: nowrap; font-family: "Open Sans", "Noto Sans CJK SC", sans-serif; }
.start { display: grid; place-items: center; width: 48px; height: 40px; background: #000; }
.start svg { width: 16px; height: 16px; }
.cortana { display: flex; align-items: center; gap: 5px; width: 344px; height: 40px; padding: 0 14px 0 9px; background: #333; }
.cortana svg { width: 22px; height: 22px; }
.cortana .mic { width: 12px; height: 18px; }
.cortana input { flex: 1; min-width: 0; padding: 0; border: 0; background: none; font-size: 14px; }
.cortana input::placeholder { color: #999; opacity: 1; }
.pins, .apps { display: flex; height: 40px; }
.pins button { width: 50px; }
.apps { margin-left: 6px; }
.apps button { width: 48px; padding: 0 4px; }
.taskbar button svg { margin: 0 auto; }
.pins svg, .apps svg { width: 24px; height: 24px; }
.apps .run { background: linear-gradient(#78b6f4, #78b6f4) no-repeat center bottom/40px 2px; }
.apps .on { background: linear-gradient(#78b6f4, #78b6f4) no-repeat center bottom/48px 2px, #333d41; }
.links { margin-left: 15px; }
.cpu, .clock { text-align: center; line-height: 17px; }
.cpu { margin-left: 19px; }
.tray { display: flex; align-items: center; gap: 7px; margin: 0 auto 0 17px; }
.tray svg { width: 17px; height: 16px; }
.tray .kbd { width: 24px; height: 14px; }
.tray b { font-weight: normal; margin: 0 4px; }
.clock { line-height: 18px; margin-right: 18px; }
.action svg { width: 26px; height: 26px; }
.action text { fill: #fff; font-size: 12px; font-weight: bold; }
.peek { width: 5px; height: 40px; margin-left: 11px; border-left: 1px solid #555; }

.section-win { position: absolute; left: 657px; top: 132px; width: 687px; height: 571px; display: flex; flex-direction: column; padding: 0 6px 7px; border: 1px solid #555; background: #d7e3f0; }
.section-win > header { height: 30px; margin: 0 -6px; padding: 11px 0 0 8px; color: #999; background: linear-gradient(#bac8d7, #d7e3f0); }
.swtabs { display: flex; align-items: flex-end; height: 20px; padding-left: 2px; background: #f0f0f0; }
.swtabs button { width: 39px; height: 18px; border: 1px solid #d9d9d9; border-bottom: 0; }
.swtabs .cur { width: 44px; height: 20px; background: #fff; }
.swpage { flex: 1; min-height: 0; display: flex; flex-direction: column; margin: 0 3px 0 1px; padding: 3px 1px 1px 3px; border: 1px solid #d9d9d9; background: #fff; }
.swpage .band { height: 28px; gap: 6px; padding-left: 4px; }
.grip { width: 3px; height: 17px; border-left: 2px dotted #bbb; margin-right: -2px; }
.swpage .opts { gap: 4px; padding-left: 2px; }
.opts .grip { margin: 0; }
.swpage .opts .sep { margin: 0 -1px 0 12px; }
.radios { display: flex; gap: 9px; }
.radios label { display: flex; align-items: center; gap: 8px; font-family: "Liberation Sans", "Noto Sans CJK SC", sans-serif; }
.radios input { appearance: none; width: 11px; height: 11px; border: 1px solid #777; border-radius: 50%; background: #fff; }
.radios input:checked { background: radial-gradient(#000 40%, #fff 50%); }
.num { display: flex; align-items: center; gap: 7px; margin-right: 8px; }
.num span { display: flex; align-items: center; width: 78px; height: 23px; padding-right: 3px; border: 1px solid #777; background: #f8f8f8; }
.num span input { flex: 1; min-width: 0; padding: 0 8px 0 0; border: 0; background: none; text-align: right; color: #888; }
.num svg { width: 8px; height: 18px; }
.canvas { flex: 1; min-height: 0; width: 100%; background: #000; }
.small { fill: #ccc; font: 12px "Liberation Sans", sans-serif; }
.big { fill: #0f0; font: bold 15px "DejaVu Sans Mono", monospace; }
.dyn { height: 27px; padding: 2px; background: #f0f0f0; }
.dyn button { width: 58px; height: 23px; border: 1px solid #0078d7; background: #e1eefa; }
.section-win > footer { display: flex; gap: 2px; height: 26px; padding-top: 3px; background: #f0f0f0; white-space: nowrap; }
.section-win > footer span { padding: 3px 1px; border: 1px solid #d5d5d5; background: linear-gradient(#fff, #f0f0f0); overflow: hidden; font-family: Roboto, "Noto Sans CJK SC", sans-serif; }
.xy { width: 98px; }
.section-win .tip { flex: 1; display: flex; justify-content: space-between; align-items: center; }
.tip svg { width: 12px; height: 12px; align-self: flex-end; }

.grid-dlg { position: absolute; left: 162px; top: 241px; width: 411px; height: 223px; display: flex; flex-direction: column; border: 1px solid #2b86e0; background: #f0f0f0; box-shadow: 0 3px 14px rgba(0, 0, 0, .4); }
.grid-dlg header { display: flex; align-items: center; justify-content: space-between; height: 25px; padding: 0 9px 0 3px; background: #fff; }
.grid-dlg header svg { width: 12px; height: 12px; }
.grid-dlg form { display: flex; flex-direction: column; gap: 8px; padding: 14px 13px 0; }
fieldset { margin: 0; padding: 2px 9px 6px 7px; border: 1px solid #dcdcdc; height: 65px; }
legend { padding: 0; height: 16px; white-space: nowrap; }
.field { display: block; width: 100%; height: 41px; padding: 1px 2px; border: 1px solid #777; background: #fff; resize: none; outline: 0; font: 10px/14px "DejaVu Sans Mono", monospace; }
.chosen { color: #fff; background: #fff linear-gradient(#0078d7, #0078d7) no-repeat 2px 2px/43px 12px; }
.acts { display: flex; justify-content: flex-end; gap: 15px; padding: 4px 1px 0 0; }
.acts button { width: 72px; height: 23px; border: 1px solid #adadad; background: #e1e1e1; }

.ime { position: absolute; left: 701px; top: 0; display: flex; align-items: flex-start; }
.ime .logo { width: 26px; height: 27px; z-index: 1; }
.keys { display: flex; align-items: center; gap: 4px; width: 183px; height: 24px; margin: 3px 0 0 -2px; padding-left: 8px; border: 1px solid #b7c7d9; background: #fff; }
.keys svg, .keys b { width: 18px; height: 18px; }
.keys b { color: #1f70c8; font-size: 16px; line-height: 18px; }
.ball { position: absolute; left: 1041px; top: -29px; width: 48px; height: 48px; padding-top: 26px; border: 2px solid #e4e4e4; border-radius: 50%; background: #35c262; box-shadow: 0 1px 5px rgba(0, 0, 0, .6); color: #fff; text-align: center; font-weight: bold; }
.hl { position: absolute; border: 3px solid #f00; pointer-events: none; }
.hl-title { left: 127px; top: 226px; width: 106px; height: 46px; }
.hl-grid { left: 611px; top: 145px; width: 148px; height: 73px; }
```
